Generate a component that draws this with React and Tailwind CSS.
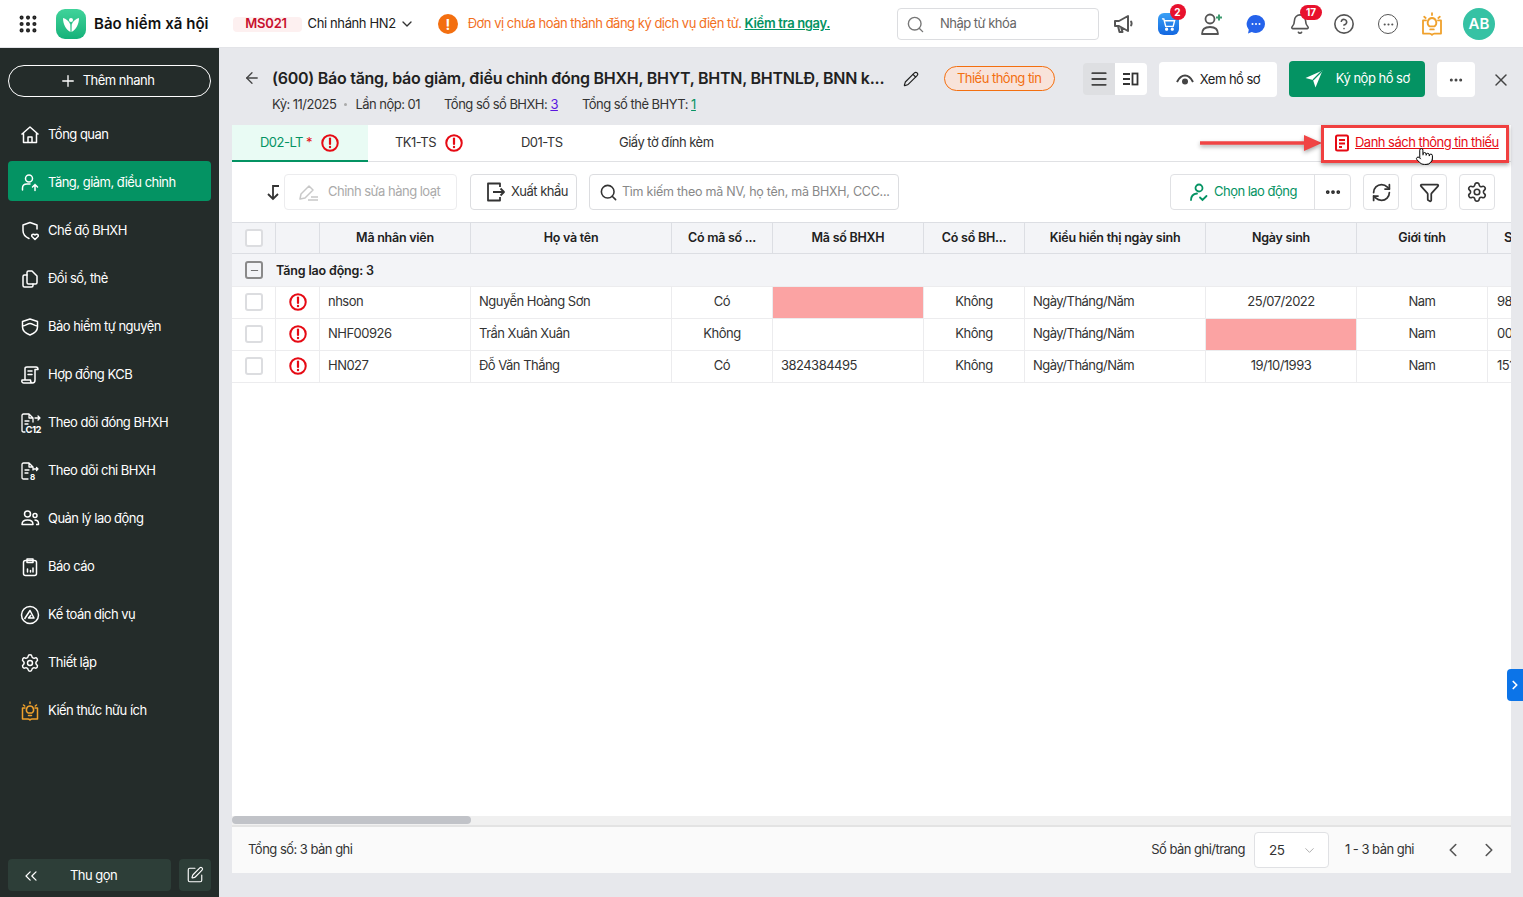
import React from 'react';
import {
  ArrowLeft, Bell, ChevronDown, ChevronLeft, ChevronRight, ChevronsLeft, CircleHelp, Ellipsis,
  Filter, Grip, Menu, Minus, Pencil, Plus, Pointer, RefreshCw, Search, Settings, SquarePen, X,
} from 'lucide-react';

const Home = () => (
  <svg width="20" height="20" viewBox="0 0 20 20" fill="none" stroke="currentColor" strokeWidth="1.5" strokeLinejoin="round">
    <path d="M1.5 9.5 10 2l8.500 7.500M3.500 8v9.500h13V8M8 17.500V12h4v5.500" />
  </svg>
);
const UserUp = () => (
  <svg width="20" height="20" viewBox="0 0 20 20" fill="none" stroke="currentColor" strokeWidth="1.500" strokeLinecap="round">
    <circle cx="9" cy="5.500" r="3.500" />
    <path d="M2.500 17v-2c0-2.500 2-4 4.500-4h3M15 17.500v-6M12.500 14l2.500-2.500 2.500 2.500" />
  </svg>
);
const ShieldHeart = () => (
  <svg width="20" height="20" viewBox="0 0 20 20" fill="none" stroke="currentColor" strokeWidth="1.500" strokeLinecap="round" strokeLinejoin="round">
    <path d="M17 8V4l-7-2.500L3 4v5.500c0 3.500 2.500 6.500 6 8" />
    <path d="M15 18.500l-3-3c-1.300-1.500 1.500-3.300 3-1.500 1.500-1.800 4.300 0 3 1.500z" />
  </svg>
);
const Docs = () => (
  <svg width="20" height="20" viewBox="0 0 20 20" fill="none" stroke="currentColor" strokeWidth="1.500" strokeLinecap="round" strokeLinejoin="round">
    <path d="M7 6H4.500C3.500 6 3 6.500 3 7.500v9C3 17.500 3.500 18 4.500 18h7c1 0 1.500-.5 1.500-1.500V15" />
    <path d="M7 3.500C7 2.500 7.500 2 8.500 2H12l5 5v6.500c0 1-.5 1.500-1.500 1.500h-7C7.500 15 7 14.500 7 13.500z" />
  </svg>
);
const ShieldMask = () => (
  <svg width="20" height="20" viewBox="0 0 20 20" fill="none" stroke="currentColor" strokeWidth="1.500" strokeLinejoin="round">
    <path d="M10 2 2.500 4.500V10c0 4 3.500 6.500 7.500 8 4-1.500 7.500-4 7.500-8V4.500z" />
    <path d="M2.500 9c3 0 5-2.500 7.500-2.500S14.500 9 17.500 9" />
  </svg>
);
const Contract = () => (
  <svg width="20" height="20" viewBox="0 0 20 20" fill="none" stroke="currentColor" strokeWidth="1.500" strokeLinecap="round" strokeLinejoin="round">
    <path d="M5 15V3.500C5 2.500 6 2 7 2h9c1.500 0 2 1 2 2.500h-3V15c0 2-1 3-2.500 3h-9C2 18 1.500 16.500 2 15h8.500c0 1.500.5 3 2 3M8 6h4M8 9.500h4" />
  </svg>
);
const DocC12 = () => (
  <svg width="22" height="22" viewBox="0 0 22 22" fill="none" stroke="currentColor" strokeWidth="1.300" strokeLinecap="round" strokeLinejoin="round">
    <path d="M5 20H3.500C2.500 20 2 19.500 2 18.500v-15C2 2.500 2.500 2 3.500 2H9l4 4v4M9 2v4h4M5 9h4M5 12h3M15 6h5M18 4l2 2-2 2" />
    <text x="5.500" y="21" fontSize="9.500" fontWeight="700" fill="currentColor" stroke="none" fontFamily="Inter, sans-serif">C12</text>
  </svg>
);
const DocS = () => (
  <svg width="20" height="20" viewBox="0 0 20 20" fill="none" stroke="currentColor" strokeWidth="1.300" strokeLinecap="round" strokeLinejoin="round">
    <path d="M8 18H3.500C2.500 18 2 17.500 2 16.500v-13C2 2.500 2.500 2 3.500 2H9l4 4v3M9 2v4h4M5 9h4M5 12h3M14 8h4M16.500 6.500 18 8l-1.500 1.500" />
    <text x="10" y="18.500" fontSize="8" fontWeight="700" fill="currentColor" stroke="none" fontFamily="Inter, sans-serif">8</text>
  </svg>
);
const Users = () => (
  <svg width="20" height="20" viewBox="0 0 20 20" fill="none" stroke="currentColor" strokeWidth="1.500" strokeLinejoin="round">
    <circle cx="7.500" cy="5" r="3" />
    <circle cx="15" cy="6.500" r="2" />
    <path d="M2 15.500c0-3 2.500-4.500 5.500-4.500s5.500 1.500 5.500 4.500zM14.500 11c2 0 4 1 4 3.500V15.500H16" />
  </svg>
);
const Report = () => (
  <svg width="20" height="20" viewBox="0 0 20 20" fill="none" stroke="currentColor" strokeWidth="1.500" strokeLinecap="round" strokeLinejoin="round">
    <rect x="3.500" y="3.500" width="13" height="15" rx="2" />
    <path d="M7 2h6v3.500H7zM7.500 15v-3M10.500 15v-1.500M13 15v-4" />
  </svg>
);
const Ketoan = () => (
  <svg width="20" height="20" viewBox="0 0 20 20" fill="none" stroke="currentColor" strokeWidth="1.500" strokeLinejoin="round">
    <circle cx="10" cy="10" r="8.500" />
    <path d="M4.500 14 10 5.500l4 7.500H8.500l2.500-3" />
  </svg>
);
const BookIdea = ({ size = 20, color = '#f0a12c' }) => (
  <svg width={size} height={size} viewBox="0 0 20 20" fill="none" stroke={color} strokeWidth="1.500" strokeLinecap="round" strokeLinejoin="round">
    <path d="M10 1v1.500M3.500 4l1.200 1M16.500 4l-1.200 1M5 7H2.500v11H8c.8 0 1.500.4 2 1 .5-.6 1.200-1 2-1h5.500V7H15" />
    <path d="M8 12c-3-2-1.500-7 2-7s5 5 2 7zM8.500 14.500h3" />
  </svg>
);
const Gear = ({ size = 20 }) => <Settings size={size} strokeWidth={1.75} />;
const AlertDot = ({ size = 18 }) => (
  <svg width={size} height={size} viewBox="0 0 18 18" fill="none">
    <circle cx="9" cy="9" r="7.750" stroke="#e60a14" strokeWidth="2" />
    <path d="M9 4.500v5.500" stroke="#e60a14" strokeWidth="2.200" strokeLinecap="round" />
    <circle cx="9" cy="13" r="1.200" fill="#e60a14" />
  </svg>
);
const Logo = () => (
  <div className="w-[30px] h-[30px] rounded-[9px] bg-gradient-to-b from-[#3fd39a] to-[#12b27a] flex items-center justify-center">
    <svg width="20" height="20" viewBox="0 0 20 20" fill="white">
      <circle cx="10" cy="6" r="2" />
      <path d="M2 4c3 .5 6 3 7.300 6.500L9.500 18C5 16 2 10 2 4zM18 4c-3 .5-6 3-7.300 6.500l-.2 7.500C15 16 18 10 18 4z" />
    </svg>
  </div>
);

const navItems = [
  { label: 'Tổng quan', icon: <Home /> },
  { label: 'Tăng, giảm, điều chỉnh', icon: <UserUp />, active: true },
  { label: 'Chế độ BHXH', icon: <ShieldHeart /> },
  { label: 'Đổi sổ, thẻ', icon: <Docs /> },
  { label: 'Bảo hiểm tự nguyện', icon: <ShieldMask /> },
  { label: 'Hợp đồng KCB', icon: <Contract /> },
  { label: 'Theo dõi đóng BHXH', icon: <DocC12 /> },
  { label: 'Theo dõi chi BHXH', icon: <DocS /> },
  { label: 'Quản lý lao động', icon: <Users /> },
  { label: 'Báo cáo', icon: <Report /> },
  { label: 'Kế toán dịch vụ', icon: <Ketoan /> },
  { label: 'Thiết lập', icon: <Gear /> },
  { label: 'Kiến thức hữu ích', icon: <BookIdea /> },
];

const cols = 'grid grid-cols-[44px_44px_151px_201px_101px_151px_101px_181px_151px_131px_151px]';

const rows = [
  { code: 'nhson', name: 'Nguyễn Hoàng Sơn', has: 'Có', bhxh: '', missBhxh: true, dob: '25/07/2022', extra: '98' },
  { code: 'NHF00926', name: 'Trần Xuân Xuân', has: 'Không', bhxh: '', dob: '', missDob: true, extra: '00' },
  { code: 'HN027', name: 'Đỗ Văn Thắng', has: 'Có', bhxh: '3824384495', dob: '19/10/1993', extra: '151' },
];

const headers = ['Mã nhân viên', 'Họ và tên', 'Có mã số ...', 'Mã số BHXH', 'Có sổ BH...', 'Kiểu hiển thị ngày sinh', 'Ngày sinh', 'Giới tính'];

function Checkbox() {
  return <div className="w-[18px] h-[18px] rounded-[3px] border-2 border-[#dcdde0] bg-white" />;
}

function Slot({ children }) {
  return <div className="w-11 flex items-center justify-center">{children}</div>;
}

function Sidebar() {
  return (
    <aside className="w-[219px] shrink-0 bg-[#242c2a] flex flex-col text-white relative">
      <div className="px-2 pt-[17px]">
        <button className="w-full h-8 rounded-full border border-white flex items-center justify-center gap-[6px] pr-[6px] text-[13px] tracking-[-0.5px]">
          <Plus size={18} strokeWidth={1.75} />
          Thêm nhanh
        </button>
      </div>
      <nav className="px-2 mt-[16px] flex flex-col gap-2">
        {navItems.map((item) => (
          <div
            key={item.label}
            className={`h-10 rounded flex items-center pl-[13px] pt-[4px] text-[13px] ${item.active ? 'bg-[#049363]' : ''}`}
          >
            <span className="w-7 shrink-0 flex items-center -ml-[1px]">{item.icon}</span>
            {item.label}
          </div>
        ))}
      </nav>
      <div className="mt-auto px-2 pb-[6px] flex gap-2">
        <button className="w-[163px] h-8 rounded bg-[#2d3e38] flex items-center pl-[13px] pt-[1px] text-[13px]">
          <ChevronsLeft size={20} strokeWidth={1.5} />
          <span className="ml-[29px]">Thu gọn</span>
        </button>
        <button className="w-8 h-8 rounded bg-[#2d3e38] flex items-center justify-center">
          <SquarePen size={18} strokeWidth={1.5} />
        </button>
      </div>
    </aside>
  );
}

function Header() {
  return (
    <header className="h-12 shrink-0 bg-white border-b border-[#e3e4e8] flex items-center pt-[1px] text-[13px] text-[#212121] pr-[28px]">
      <Grip size={22} strokeWidth={2.5} className="ml-[17px] text-[#222]" />
      <div className="ml-[17px]"><Logo /></div>
      <span className="ml-[8px] text-[15px] font-semibold text-[#111] tracking-[0.05px]">Bảo hiểm xã hội</span>
      <span className="ml-[24px] w-[69px] h-[15px] bg-[#fdf0f0] text-[#c8102e] font-semibold flex items-center justify-center rounded-sm tracking-[-0.2px] pr-[2px]">MS021</span>
      <span className="ml-[6px] tracking-[-0.38px]">Chi nhánh HN2</span>
      <ChevronDown size={16} className="ml-[3px] text-[#333]" />
      <div className="ml-[23px] w-5 h-5 rounded-full bg-[#f36f10] text-white flex items-center justify-center font-bold text-[14px]">!</div>
      <span className="ml-[10px] text-[#f2701d] tracking-[-0.49px]">Đơn vị chưa hoàn thành đăng ký dịch vụ điện tử.</span>
      <span className="ml-[3px] text-[#049363] font-semibold underline tracking-[-0.35px]">Kiểm tra ngay.</span>
      <div className="ml-auto w-[202px] h-8 rounded border border-[#dcdde0] flex items-center pl-[8px]">
        <Search size={19} strokeWidth={1.75} className="text-[#777]" />
        <span className="ml-[15px] text-[#666]">Nhập từ khóa</span>
      </div>
      <div className="ml-[3px] flex items-center text-[#555]">
        <Slot>
          <svg width="22" height="22" viewBox="0 0 22 22" fill="none" stroke="#555" strokeWidth="2" strokeLinejoin="round">
            <path d="M2 8h4l9-5v15l-9-5H2zM5 13l1.500 6h3L8 14M17.500 8c1.500 1 1.500 4 0 5" />
          </svg>
        </Slot>
        <Slot>
          <div className="relative">
            <div className="w-[21px] h-[22px] rounded-md bg-gradient-to-b from-[#3aa0f5] to-[#1467e0] flex items-center justify-center">
              <svg width="15" height="15" viewBox="0 0 16 16" fill="none" stroke="white" strokeWidth="1.500"><path d="M1 2h2l2 8h8l1.500-6H4" /><circle cx="6" cy="13" r="1" fill="white" /><circle cx="12" cy="13" r="1" fill="white" /></svg>
            </div>
            <span className="absolute -top-[9px] left-[12px] w-[16px] h-[16px] rounded-full bg-[#e8112d] text-white text-[10px] font-bold flex items-center justify-center tracking-normal">2</span>
          </div>
        </Slot>
        <Slot>
          <svg width="24" height="24" viewBox="0 0 24 24" fill="none" stroke="#555" strokeWidth="1.800"><circle cx="10" cy="7" r="4.500" /><path d="M2 22c0-5 3-7 8-7s8 2 8 7z" strokeLinejoin="round" /><path d="M19 2.500v6M16 5.500h6" stroke="#3c9a6e" strokeWidth="2" /></svg>
        </Slot>
        <Slot>
          <svg width="22" height="22" viewBox="0 0 22 22"><path d="M11 2a9 9 0 0 1 0 18c-1.500 0-3-.4-4.200-1L3 20.500l.8-3.800A9 9 0 0 1 11 2z" fill="#2563eb" /><circle cx="7.500" cy="11" r="1" fill="white" /><circle cx="11" cy="11" r="1" fill="white" /><circle cx="14.500" cy="11" r="1" fill="white" /></svg>
        </Slot>
        <Slot>
          <div className="relative">
            <Bell size={22} strokeWidth={1.75} />
            <span className="absolute -top-[8px] left-[0px] ml-[1px] translate-x-[10px] w-[22px] h-[15px] rounded-full bg-[#e8112d] text-white text-[10px] font-bold flex items-center justify-center tracking-normal">17</span>
          </div>
        </Slot>
        <Slot><CircleHelp size={22} strokeWidth={1.75} /></Slot>
        <Slot><div className="w-[20px] h-[20px] rounded-full border-[1.500px] border-[#555] flex items-center justify-center"><Ellipsis size={13} /></div></Slot>
        <Slot><BookIdea size={24} /></Slot>
        <div className="w-8 h-8 ml-[9px] rounded-full bg-[#36c2a4] text-white text-[15px] font-semibold flex items-center justify-center tracking-normal">AB</div>
      </div>
    </header>
  );
}

function TitleBar() {
  return (
    <div className="h-[77px] shrink-0 pl-[11px] pr-[12px] pt-[14px] flex text-[#212121]">
      <ArrowLeft size={18} strokeWidth={1.75} className="mt-[7px] text-[#444]" />
      <div className="ml-[11px] w-[632px]">
        <div className="text-[16px] font-semibold leading-[32px] h-[32px] tracking-[-0.26px] whitespace-nowrap">
          (600) Báo tăng, báo giảm, điều chỉnh đóng BHXH, BHYT, BHTN, BHTNLĐ, BNN k...
        </div>
        <div className="flex items-center text-[13px] text-[#333] mt-[1px] whitespace-nowrap">
          <span>Kỳ: 11/2025</span>
          <span className="mx-[8px] w-[3px] h-[3px] rounded-full bg-[#aaa]" />
          <span>Lần nộp: 01</span>
          <span className="ml-[24px]">Tổng số sổ BHXH: <span className="text-[#5a16e0] underline">3</span></span>
          <span className="ml-[24px]">Tổng số thẻ BHYT: <span className="text-[#049363] underline">1</span></span>
        </div>
      </div>
      <Pencil size={16} strokeWidth={1.75} className="mt-[9px]" />
      <div className="ml-[25px] mt-[4px] w-[111px] h-[25px] rounded-full border border-[#f36f10] bg-[#f8e3da] text-[#f36f10] text-[13px] flex items-center justify-center">Thiếu thông tin</div>
      <div className="ml-[28px] flex h-8 mt-[1px]">
        <div className="w-8 h-8 rounded-l bg-[#dedfe2] flex items-center justify-center"><Menu size={20} strokeWidth={2.25} className="text-[#444]" /></div>
        <div className="w-8 h-8 rounded-r bg-white flex items-center justify-center">
          <svg width="16" height="14" viewBox="0 0 16 14" fill="none" stroke="#333" strokeWidth="1.800"><path d="M0 2h7M0 7h7M0 12h7" /><rect x="9.500" y="1.500" width="5" height="11" /></svg>
        </div>
      </div>
      <div className="ml-[12px] w-[119px] h-[35px] rounded bg-white flex items-center justify-center gap-[6px] text-[13px]">
        <svg width="18" height="14" viewBox="0 0 18 14" fill="none" stroke="#444" strokeWidth="2"><path d="M1 9C3.500 4 6.500 2.500 9 2.500S14.500 4 17 9" /><circle cx="9" cy="8.500" r="3" fill="#444" stroke="none" /></svg>
        Xem hồ sơ
      </div>
      <div className="ml-[12px] w-[136px] h-[36px] rounded bg-[#049363] text-white flex items-center justify-center gap-[13px] text-[13px] -mt-[1px]">
        <svg width="18" height="18" viewBox="0 0 18 18"><path d="M0.500 8 17.500 0.500 10.500 17.500 8 10z" fill="white" /><path d="M17 1 8 10" stroke="#049363" strokeWidth="1.200" /></svg>
        Ký nộp hồ sơ
      </div>
      <div className="ml-[12px] w-[38px] h-[35px] rounded bg-white flex items-center justify-center"><Ellipsis size={16} strokeWidth={2.5} className="text-[#444]" /></div>
      <X size={20} strokeWidth={1.75} className="ml-[16px] mt-[8px] text-[#444]" />
    </div>
  );
}

function Tabs() {
  return (
    <div className="h-[37px] shrink-0 flex items-stretch border-b border-[#e0e1e4] text-[13px] text-[#333] relative">
      <div className="w-[136px] bg-[#e9fbf4] border-b-2 border-[#049363] -mb-px flex items-center pl-[28px] text-[#049363]">
        D02-LT<span className="text-[#e60a14] ml-[3px]">*</span>
        <span className="ml-[9px]"><AlertDot /></span>
      </div>
      <div className="w-[124px] flex items-center pl-[27px]">TK1-TS<span className="ml-[9px]"><AlertDot /></span></div>
      <div className="w-[99px] flex items-center pl-[29px]">D01-TS</div>
      <div className="flex items-center pl-[28px]">Giấy tờ đính kèm</div>
      {/* annotation over the tab row */}
      <svg className="absolute left-[968px] top-[9px] drop-shadow-[0_2px_2px_rgba(0,0,0,0.35)]" width="124" height="18" viewBox="0 0 124 18">
        <path d="M0 9h106" stroke="#f04444" strokeWidth="3.500" />
        <path d="M104 1l18 8-18 8z" fill="#f04444" />
      </svg>
      <div className="absolute right-[2px] top-0 w-[188px] h-[38px] border-[3px] border-[#f04040] shadow-[0_2px_4px_rgba(0,0,0,0.35)] bg-white flex items-center pl-[10px] pb-[2px] text-[#e60a14]">
        <svg width="16" height="18" viewBox="0 0 16 18" fill="none" stroke="#e60a14" strokeWidth="2"><rect x="2" y="1.500" width="12" height="15" rx="1.500" /><path d="M5 6h6M5 9.500h6M5 13h3" /></svg>
        <span className="ml-[5px] underline whitespace-nowrap">Danh sách thông tin thiếu</span>
      </div>
      <Pointer size={19} strokeWidth={1.25} fill="white" className="absolute left-[1183px] top-[22px] text-black z-10" />
    </div>
  );
}

function IconBtn({ children }) {
  return <div className="w-9 h-9 rounded border border-[#e0e1e4] flex items-center justify-center text-[#333]">{children}</div>;
}

function Toolbar() {
  return (
    <div className="h-[60px] shrink-0 flex items-center pr-[16px] text-[13px] text-[#333]">
      <svg className="ml-[34px]" width="14" height="18" viewBox="0 0 14 18" fill="none" stroke="#333" strokeWidth="1.800"><path d="M13 3H7v13M2 11l5 5 5-5" /></svg>
      <div className="ml-[4px] w-[173px] h-9 rounded border border-[#ececee] flex items-center pl-[14px] text-[#aaa]">
        <svg width="20" height="18" viewBox="0 0 20 18" fill="none" stroke="#c8c8c8" strokeWidth="1.500" strokeLinejoin="round"><path d="M1 16l1-5 8-8 4 4-8 8zM12 14h7M9 17h10" /></svg>
        <span className="ml-[9px]">Chỉnh sửa hàng loạt</span>
      </div>
      <div className="ml-[13px] w-[107px] h-9 rounded border border-[#dcdde0] flex items-center pl-[15px]">
        <svg width="20" height="22" viewBox="0 0 20 22" fill="none" stroke="#333" strokeWidth="1.800" strokeLinejoin="round"><path d="M14 6V2.500H2v17h12V16M7 11h11M14.500 7.500 18 11l-3.500 3.500" /></svg>
        <span className="ml-[5px]">Xuất khẩu</span>
      </div>
      <div className="ml-[12px] w-[310px] h-9 rounded border border-[#dcdde0] flex items-center pl-[9px]">
        <Search size={19} strokeWidth={2} />
        <span className="ml-[4px] text-[#888] text-[12.500px] tracking-[-0.25px]">Tìm kiếm theo mã NV, họ tên, mã BHXH, CCC...</span>
      </div>
      <div className="ml-auto flex items-center">
        <div className="h-9 w-[181px] rounded border border-[#e0e1e4] flex items-stretch">
          <div className="flex-1 flex items-center pl-[18px] text-[#049363] border-r border-[#e0e1e4]">
            <svg width="20" height="20" viewBox="0 0 20 20" fill="none" stroke="#049363" strokeWidth="1.800" strokeLinecap="round"><circle cx="10" cy="6" r="3.500" /><path d="M2 18c0-3.500 2-6 6-6.500M11 15.500l2.500 2.500 4-4" /></svg>
            <span className="ml-[5px]">Chọn lao động</span>
          </div>
          <div className="w-[35px] flex items-center justify-center"><Ellipsis size={18} strokeWidth={3} className="text-[#222]" /></div>
        </div>
        <div className="ml-[12px] flex gap-[12px]">
          <IconBtn><RefreshCw size={21} strokeWidth={2} /></IconBtn>
          <IconBtn><Filter size={21} strokeWidth={2} /></IconBtn>
          <IconBtn><Gear size={22} /></IconBtn>
        </div>
      </div>
    </div>
  );
}

function Table() {
  return (
    <div className="flex-1 min-h-0 overflow-hidden text-[13px] text-[#333]">
      <div className="w-[1400px]">
        <div className={`${cols} h-[32px] bg-[#f3f4f7] border-y border-[#dcdee3] font-semibold text-[#212121]`}>
          <div className="flex items-center justify-center border-r border-[#dcdee3]"><Checkbox /></div>
          <div className="border-r border-[#dcdee3]" />
          {headers.map((h) => (
            <div key={h} className="flex items-center justify-center border-r border-[#dcdee3] text-[12.500px] tracking-[-0.25px] whitespace-nowrap">{h}</div>
          ))}
          <div className="flex items-center pl-[16px]">Số</div>
        </div>
        <div className="h-[33px] bg-[#f3f4f7] border-b border-[#ececee] flex items-center pl-[13px] font-semibold text-[#212121] text-[12.500px] tracking-[-0.15px]">
          <div className="w-[18px] h-[18px] rounded-[3px] border-2 border-[#8a8a8a] flex items-center justify-center text-[#666]"><Minus size={11} strokeWidth={2} /></div>
          <span className="ml-[13px] pt-[2px]">Tăng lao động: 3</span>
        </div>
        {rows.map((r) => (
          <div key={r.code} className={`${cols} h-[32px] border-b border-[#ececee]`}>
            <div className="flex items-center justify-center pb-[1px] border-r border-[#ececee]"><Checkbox /></div>
            <div className="flex items-center justify-center pb-[1px] border-r border-[#ececee]"><AlertDot /></div>
            <div className="flex items-center pl-[8px] pb-[2px] border-r border-[#ececee]">{r.code}</div>
            <div className="flex items-center pl-[8px] pb-[2px] border-r border-[#ececee]">{r.name}</div>
            <div className="flex items-center justify-center pb-[2px] border-r border-[#ececee]">{r.has}</div>
            <div className={`flex items-center pl-[8px] pb-[2px] border-r border-[#ececee] ${r.missBhxh ? 'bg-[#fba3a3]' : ''}`}>{r.bhxh}</div>
            <div className="flex items-center justify-center pb-[2px] border-r border-[#ececee]">Không</div>
            <div className="flex items-center pl-[8px] pb-[2px] border-r border-[#ececee]">Ngày/Tháng/Năm</div>
            <div className={`flex items-center justify-center pb-[2px] border-r border-[#ececee] ${r.missDob ? 'bg-[#fba3a3]' : ''}`}>{r.dob}</div>
            <div className="flex items-center justify-center pb-[2px] border-r border-[#ececee]">Nam</div>
            <div className="flex items-center pl-[9px] pb-[2px]">{r.extra}</div>
          </div>
        ))}
      </div>
    </div>
  );
}

function Footer() {
  return (
    <>
      <div className="h-[9px] shrink-0 bg-[#f0f0f0]">
        <div className="w-[239px] h-[8px] rounded-full bg-[#c1c3c8]" />
      </div>
      <div className="h-[48px] shrink-0 bg-[#fafafa] border-t-2 border-[#e3e3e3] flex items-center pl-[16px] pr-[11px] text-[13px] text-[#333]">
        <span>Tổng số: 3 bản ghi</span>
        <span className="ml-auto">Số bản ghi/trang</span>
        <div className="ml-[9px] w-[75px] h-9 rounded border border-[#e0e1e4] bg-white flex items-center pl-[14px] pr-[11px] justify-between text-[13.500px]">
          25
          <ChevronDown size={15} strokeWidth={1.25} className="text-[#999]" />
        </div>
        <span className="ml-[16px]">1 - 3 bản ghi</span>
        <ChevronLeft size={22} strokeWidth={1.75} className="ml-[28px] text-[#555]" />
        <ChevronRight size={22} strokeWidth={1.75} className="ml-[14px] text-[#555]" />
      </div>
    </>
  );
}

export default function App() {
  return (
    <div className="h-[897px] w-[1523px] overflow-hidden flex flex-col font-['Inter',sans-serif] tracking-[-0.52px] bg-[#e7e8ec] relative">
      <Header />
      <div className="flex-1 min-h-0 flex">
        <Sidebar />
        <main className="flex-1 min-w-0 flex flex-col">
          <div className="pl-[13px] flex flex-col flex-1 min-h-0">
            <TitleBar />
            <div className="w-[1279px] h-[748px] bg-white flex flex-col relative">
              <Tabs />
              <Toolbar />
              <Table />
              <Footer />
            </div>
          </div>
        </main>
      </div>
      <div className="absolute left-[1507px] top-[669px] w-4 h-8 rounded-l bg-[#0c74e8] flex items-center justify-center text-white">
        <ChevronRight size={14} strokeWidth={3} />
      </div>
    </div>
  );
}
